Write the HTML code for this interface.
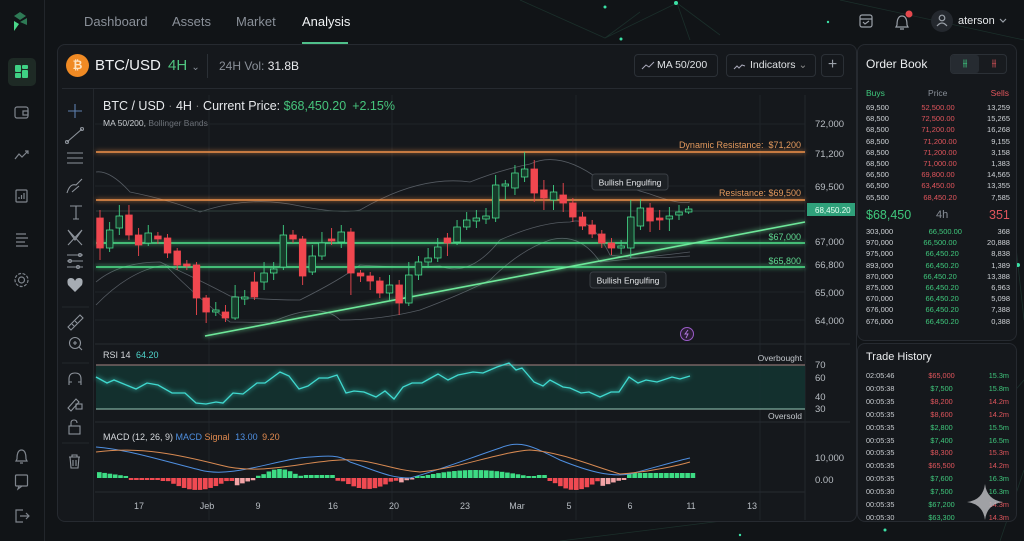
<!DOCTYPE html>
<html><head><meta charset="utf-8">
<style>
*{margin:0;padding:0;box-sizing:border-box}
body{width:1024px;height:541px;overflow:hidden;background:#111417;font-family:"Liberation Sans",sans-serif;color:#d6d9dd;position:relative}
.a{position:absolute;white-space:nowrap}
.nav{font-size:13px;color:#8a9099;top:14px}
.ob{font-size:7.5px;line-height:11.2px}
.ob div{display:flex;justify-content:space-between;position:relative;padding:0 3px}
.th div{display:flex;justify-content:space-between;font-size:7.3px;line-height:12.9px}
.r{color:#e0555c}.g{color:#3fc77c}
</style></head><body>
<!-- background network -->
<svg class="a" style="left:0;top:0" width="1024" height="541">
<g stroke="#1f3a33" stroke-width="0.8" fill="none" opacity="0.7">
<path d="M520 0 L605 38 L677 3 L720 35 M677 3 L690 40 M605 38 L640 12 M840 0 L1024 40 M1000 100 L1024 320 M990 420 L1024 380 M1000 541 L1024 470 M560 541 L730 520"/>
</g>
<g fill="#3be0a5"><circle cx="676" cy="3" r="2"/><circle cx="605" cy="7" r="1.5"/><circle cx="621" cy="39" r="1.5"/><circle cx="828" cy="22" r="1.2"/><circle cx="1018" cy="265" r="2"/><circle cx="885" cy="530" r="1.5"/><circle cx="740" cy="535" r="1.2"/></g>
</svg>
<!-- sidebar -->
<div class="a" style="left:44px;top:0;width:1px;height:541px;background:#22262b"></div>
<svg class="a" style="left:0;top:0" width="44" height="541" fill="none" stroke="#7f858d" stroke-width="1.2">
<path d="M14 16 L20 12 L26 16 L20 20Z" fill="#2e7a55" stroke="none"/><path d="M14 21 L19 24 L14 31Z" fill="#4bd78a" stroke="none"/><path d="M20 22 L27 18 L27 25Z" fill="#2e7a55" stroke="none"/>
<rect x="8" y="58" width="28" height="28" rx="5" fill="#1e2a25" stroke="none"/>
<g fill="#3fd184" stroke="none"><rect x="15" y="65" width="6" height="7" rx="1"/><rect x="22" y="65" width="6" height="4" rx="1"/><rect x="15" y="73" width="6" height="5" rx="1"/><rect x="22" y="70" width="6" height="8" rx="1"/></g>
<rect x="15" y="107" width="13" height="11" rx="2"/><path d="M23 111h5v4h-5z"/>
<path d="M15 159 L19 154 L22 157 L28 151 M25 151h3v3"/>
<rect x="16" y="190" width="11" height="12" rx="1"/><path d="M19 199v-2M21.5 199v-4M24 199v-6"/>
<path d="M16 234h10M16 238h12M16 242h9M16 246h12"/>
<circle cx="21.5" cy="280" r="3"/><circle cx="21.5" cy="280" r="6.5" stroke-dasharray="3 1.5"/>
<path d="M17 459 Q17 450 21.5 450 Q26 450 26 459 L27 461 H16Z M20 463h3"/>
<rect x="15.5" y="475" width="12" height="11" rx="1"/><path d="M19 486 l-1 3 4-3"/>
<path d="M23 510h-7v12h7M20 516h9M26 513l3 3-3 3"/>
</svg>
<!-- top nav -->
<div class="a nav" style="left:84px">Dashboard</div>
<div class="a nav" style="left:172px">Assets</div>
<div class="a nav" style="left:236px">Market</div>
<div class="a nav" style="left:302px;color:#f1f3f5">Analysis</div>
<div class="a" style="left:302px;top:42px;width:46px;height:2px;background:#4fbf8a"></div>
<svg class="a" style="left:850px;top:8px" width="174" height="28" fill="none" stroke="#9aa0a8" stroke-width="1.2">
<rect x="10" y="7" width="12" height="12" rx="2"/><path d="M10 11h12M13 14l2 2 4-3"/>
<path d="M47 17 Q47 8 52 8 Q57 8 57 17 L58 19 H46Z M50 21h4"/><circle cx="59" cy="6" r="3.5" fill="#e5484d" stroke="none"/>
<circle cx="92" cy="13" r="11" fill="#24282e" stroke="none"/><circle cx="92" cy="10" r="2.8"/><path d="M87 18 Q92 12 97 18"/>
<path d="M150 11l3 3 3-3"/>
</svg>
<div class="a" style="left:958px;top:15px;font-size:11px;color:#e5e7ea">aterson</div>
<!-- main panel -->
<div class="a" style="left:57px;top:44px;width:800px;height:478px;border:1px solid #262a30;border-radius:8px;background:#15181c"></div>
<div class="a" style="left:66px;top:54px;width:23px;height:23px;border-radius:50%;background:#f08a24;color:#fde3c2;font-size:12px;font-weight:bold;text-align:center;line-height:23px">₿</div>
<div class="a" style="left:95px;top:57px;font-size:15px;color:#f0f2f4">BTC/USD <span style="color:#4fc47f;margin-left:3px">4H</span> <span style="color:#8a9099;font-size:10px">⌄</span></div>
<div class="a" style="left:207px;top:54px;width:1px;height:24px;background:#2b3036"></div>
<div class="a" style="left:219px;top:59px;font-size:12px;color:#8a9099">24H Vol: <span style="color:#e8eaed">31.8B</span></div>
<div class="a" style="left:634px;top:54px;width:84px;height:23px;border:1px solid #2b3036;border-radius:4px;font-size:10.5px;line-height:21px;padding-left:22px;color:#dfe2e5">MA 50/200</div>
<div class="a" style="left:726px;top:54px;width:90px;height:23px;border:1px solid #2b3036;border-radius:4px;font-size:10.5px;line-height:21px;padding-left:23px;color:#dfe2e5">Indicators <span style="color:#888">⌄</span></div>
<div class="a" style="left:821px;top:54px;width:23px;height:23px;border:1px solid #2b3036;border-radius:4px;font-size:16px;line-height:20px;text-align:center;color:#9aa0a8">+</div>
<svg class="a" style="left:640px;top:60px" width="120" height="12" fill="none" stroke="#aab" stroke-width="1"><path d="M2 9l4-4 3 2 5-5"/><path d="M94 9l3-3 2 2 3-3 3 1"/></svg>
<div class="a" style="left:62px;top:88px;width:790px;height:1px;background:#262a30"></div>
<!-- tools column -->
<div class="a" style="left:93px;top:89px;width:1px;height:432px;background:#23272c"></div>
<svg class="a" style="left:58px;top:95px" width="34" height="380" fill="none" stroke="#8d939b" stroke-width="1.1">
<path d="M17 9v14M10 16h14" stroke="#5e7fae"/>
<path d="M9 47l15-13"/><circle cx="9" cy="47" r="1.5"/><circle cx="24" cy="34" r="1.5"/>
<path d="M9 58h16M9 63h16M9 68h16"/>
<path d="M9 98 Q12 88 18 90 L24 84 M14 97 l7-6"/>
<path d="M12 111h12M18 111v13M15 124h6"/>
<path d="M10 135 L24 150 M24 135 L10 150 M10 135 L17 145 L24 135"/>
<path d="M9 160h16M9 166h16M9 172h16"/><circle cx="22" cy="160" r="1.5"/><circle cx="12" cy="166" r="1.5"/><circle cx="20" cy="172" r="1.5"/>
<path d="M17 197 L10 190 Q8 183 13 183 Q16 183 17 186 Q18 183 21 183 Q26 183 24 190Z" fill="#a6acb3" stroke="none"/>
<path d="M4 212h27" stroke="#24282d"/>
<path d="M10 232 L22 220 L25 223 L13 235Z M14 229l2 2M17 226l2 2"/>
<circle cx="17" cy="248" r="5.5"/><path d="M21 252l3 3M15 248h4M17 246v4"/>
<path d="M4 268h27" stroke="#24282d"/>
<path d="M11 290v-6 Q11 278 17 278 Q23 278 23 284 V290 M11 287h3M20 287h3"/>
<path d="M10 313l8-9 3 3-8 9z"/><rect x="18" y="309" width="6" height="5"/>
<rect x="11" y="331" width="11" height="8"/><path d="M13 331v-3 Q13 325 16 325 Q19 325 19 328"/>
<path d="M4 348h27" stroke="#24282d"/>
<path d="M11 362h11M14 362v-2h5v2M12 362l1 11h7l1-11M15 365v6M18 365v6"/>
</svg>
<!-- chart -->
<svg class="a" style="left:0;top:0" width="856" height="541" font-family="Liberation Sans" >
<defs>
<filter id="gl" x="-10%" y="-200%" width="120%" height="500%"><feGaussianBlur stdDeviation="2.5" result="b"/><feMerge><feMergeNode in="b"/><feMergeNode in="SourceGraphic"/></feMerge></filter>
</defs>
<g stroke="#1f2328" stroke-width="1">
<path d="M95 124H805M95 186H805M95 264H805M95 292H805M95 320H805M209 95V520M392 95V520M576 95V520M760 95V520"/>
<path d="M95 344H850M95 422H850M95 492H805" stroke="#272b31"/>
<path d="M805 95V520" stroke="#23272c"/>
</g>
<text x="103" y="110" font-size="12.5" fill="#e6e8eb">BTC / USD <tspan fill="#777">·</tspan> 4H <tspan fill="#777">·</tspan> Current Price: <tspan fill="#46c47c">$68,450.20</tspan><tspan fill="#46c47c" dx="6">+2.15%</tspan></text>
<text x="103" y="126" font-size="8.5" fill="#c8ccd0">MA 50/200, <tspan fill="#6c7178">Bollinger Bands</tspan></text>
<!-- bollinger -->
<g fill="none" stroke="#555b62" stroke-width="0.8">
<path d="M96 172 Q110 170 130 192 Q170 200 200 212 Q250 195 300 206 Q340 214 360 210 Q420 175 470 182 Q500 170 530 164 Q560 150 600 180 Q620 185 650 194 Q680 205 690 202"/>
<path d="M96 282 Q120 262 160 262 Q200 280 230 296 Q260 300 300 300 Q340 280 360 265 Q400 268 440 266 Q470 278 500 240 Q540 222 570 222 Q590 215 610 255 Q640 260 690 256"/>
<path d="M96 305 Q130 270 165 265 Q200 300 230 322 Q250 322 270 323 Q320 300 340 320 Q380 320 420 310 Q460 295 490 280 Q520 250 550 240 Q580 232 600 262 Q640 258 690 252"/>
</g>
<!-- levels -->
<g filter="url(#gl)" stroke-width="1.6">
<path d="M96 152H805M96 200H805" stroke="#f0924a"/>
<path d="M96 243H805M96 267H805" stroke="#4fe38c"/>
<path d="M205 336L805 222" stroke="#6ee89a" stroke-width="1.6"/>
</g>
<path d="M96 211H805" stroke="#3a4c48" stroke-width="0.8"/>
<g font-size="9" text-anchor="end">
<text x="801" y="148" fill="#e59a5d">Dynamic Resistance: &nbsp;$71,200</text>
<text x="801" y="196" fill="#e59a5d">Resistance: $69,500</text>
<text x="801" y="240" fill="#5fd990">$67,000</text>
<text x="801" y="264" fill="#5fd990">$65,800</text>
</g>
<g font-size="9.5" fill="#b8bdc3">
<text x="815" y="127">72,000</text><text x="815" y="157">71,200</text><text x="815" y="190">69,500</text><text x="815" y="245">67,000</text><text x="815" y="268">66,800</text><text x="815" y="296">65,000</text><text x="815" y="324">64,000</text>
</g>
<rect x="807" y="203" width="48" height="13" fill="#2fa07a"/>
<text x="815" y="213" font-size="8" fill="#e8fff3">68,450.20</text>
<g id="candles"></g>
<rect x="592" y="174" width="76" height="16" rx="3" fill="#1d2125" stroke="#3a3f45"/>
<text x="630" y="185.5" font-size="8.5" fill="#e4e6e9" text-anchor="middle">Bullish Engulfing</text>
<rect x="590" y="272" width="76" height="16" rx="3" fill="#1d2125" stroke="#3a3f45"/>
<text x="628" y="283.5" font-size="8.5" fill="#e4e6e9" text-anchor="middle">Bullish Engulfing</text>
<circle cx="687" cy="334" r="6.5" fill="#2a1d33" stroke="#9b5cc9"/><path d="M688 330l-3 4h3l-2 4" stroke="#b47ae0" fill="none" stroke-width="0.9"/>
<!-- RSI -->
<rect x="96" y="365" width="709" height="44" fill="#133331" opacity="0.9"/>
<path d="M96 365H805" stroke="#8a7070" stroke-width="1.2"/><path d="M96 409H805" stroke="#7da89a" stroke-width="1.2"/>
<text x="103" y="358" font-size="9" fill="#d5d8dc">RSI 14 <tspan fill="#4fd6cc" dx="3">64.20</tspan></text>
<text x="802" y="361" font-size="8.5" fill="#c3c7cc" text-anchor="end">Overbought</text>
<text x="802" y="419" font-size="8.5" fill="#c3c7cc" text-anchor="end">Oversold</text>
<g font-size="9.5" fill="#b8bdc3"><text x="815" y="368">70</text><text x="815" y="381">60</text><text x="815" y="400">40</text><text x="815" y="412">30</text></g>
<polyline filter="url(#gl)" fill="none" stroke="#3fd9cf" stroke-width="1.3" points="96,377 107,383 114,380 136,389 147,383 158,385 172,393 185,393 196,403 206,404 216,402 223,403 233,393 243,394 257,383 265,383 280,372 289,376 299,389 308,386 319,378 328,378 337,375 346,393 354,391 364,392 376,397 385,391 394,399 403,387 412,383 422,383 429,379 438,374 448,380 458,375 473,372 483,373 497,367 509,363 516,370 522,368 534,382 543,386 550,380 563,387 570,388 581,393 589,392 600,397 611,392 619,392 629,377 638,383 646,380 657,382 672,377 680,379 690,376"/>
<!-- MACD -->
<text x="103" y="440" font-size="9" fill="#d5d8dc">MACD (12, 26, 9) <tspan fill="#4f8fe0">MACD</tspan> <tspan fill="#e08a4f">Signal</tspan> <tspan fill="#4f8fe0" dx="3">13.00</tspan> <tspan fill="#e08a4f" dx="2">9.20</tspan></text>
<g font-size="9.5" fill="#b8bdc3"><text x="815" y="461">10,000</text><text x="815" y="483">0.00</text></g>
<g id="hist"></g>
<path d="M96 447 C130 450 160 460 200 470 C230 478 270 462 300 458 C330 455 340 455 350 462 C380 472 390 478 410 478 C440 470 470 458 500 448 C520 440 530 445 560 460 C590 472 610 477 630 474 C660 466 680 460 690 458" fill="none" stroke="#4f8fe0" stroke-width="1"/>
<path d="M96 452 C140 446 180 455 220 465 C260 476 300 462 340 460 C370 458 390 470 420 472 C460 468 500 452 530 450 C560 452 590 465 620 474 C650 472 680 465 690 462" fill="none" stroke="#d88a52" stroke-width="1"/>
<g font-size="9" fill="#b8bdc3" text-anchor="middle">
<text x="139" y="509">17</text><text x="207" y="509">Jeb</text><text x="258" y="509">9</text><text x="333" y="509">16</text><text x="394" y="509">20</text><text x="465" y="509">23</text><text x="517" y="509">Mar</text><text x="569" y="509">5</text><text x="630" y="509">6</text><text x="691" y="509">11</text><text x="752" y="509">13</text>
</g>
</svg>
<!-- order book -->
<div class="a" style="left:857px;top:44px;width:160px;height:297px;border:1px solid #262a30;border-radius:8px;background:#15181c"></div>
<div class="a" style="left:866px;top:57px;font-size:12px;color:#eceef0">Order Book</div>
<div class="a" style="left:950px;top:54px;width:57px;height:20px;border:1px solid #2b3036;border-radius:4px;background:#181b1f"></div>
<div class="a" style="left:951px;top:55px;width:28px;height:18px;border-radius:3px;background:#262b31;color:#3fd184;font-size:10px;text-align:center;line-height:18px">⫵</div>
<div class="a" style="left:981px;top:55px;width:26px;height:18px;color:#e0555c;font-size:10px;text-align:center;line-height:18px">⫵</div>
<div class="a" style="left:866px;top:88px;width:143px;font-size:8.5px;display:flex;justify-content:space-between"><span class="g">Buys</span><span style="color:#8a9099">Price</span><span class="r">Sells</span></div>
<div class="a ob" style="left:863px;top:102px;width:150px;color:#cfd3d7">
<div><span>69,500</span><span class="r">52,500.00</span><span>13,259</span><i class="a" style="left:64px;top:1px;width:86px;height:9px;background:#3a1e22;z-index:-1"></i></div>
<div><span>68,500</span><span class="r">72,500.00</span><span>15,265</span><i class="a" style="left:64px;top:1px;width:86px;height:9px;background:#3a1e22;z-index:-1"></i></div>
<div><span>68,500</span><span class="r">71,200.00</span><span>16,268</span><i class="a" style="left:64px;top:1px;width:86px;height:9px;background:#3a1e22;z-index:-1"></i></div>
<div><span>68,500</span><span class="r">71,200.00</span><span>9,155</span></div>
<div><span>68,500</span><span class="r">71,200.00</span><span>3,158</span></div>
<div><span>68,500</span><span class="r">71,000.00</span><span>1,383</span></div>
<div><span>66,500</span><span class="r">69,800.00</span><span>14,565</span><i class="a" style="left:64px;top:1px;width:86px;height:9px;background:#331c20;z-index:-1"></i></div>
<div><span>66,500</span><span class="r">63,450.00</span><span>13,355</span><i class="a" style="left:64px;top:1px;width:86px;height:9px;background:#331c20;z-index:-1"></i></div>
<div><span>65,500</span><span class="r">68,450.20</span><span>7,585</span><i class="a" style="left:62px;top:1px;width:46px;height:9px;background:#4a2226;z-index:-1"></i></div>
</div>
<div class="a" style="left:866px;top:208px;font-size:12.5px" ><span class="g">$68,450</span></div>
<div class="a" style="left:936px;top:209px;font-size:11px;color:#8a9099">4h</div>
<div class="a" style="left:989px;top:208px;font-size:12.5px" class="r"><span class="r">351</span></div>
<div class="a ob" style="left:863px;top:226px;width:150px;color:#cfd3d7">
<div><span>303,000</span><span class="g">66,500.00</span><span>368</span><i class="a" style="left:64px;top:1px;width:38px;height:9px;background:#173828;z-index:-1"></i></div>
<div><span>970,000</span><span class="g">66,500.00</span><span>20,888</span><i class="a" style="left:64px;top:1px;width:40px;height:9px;background:#173828;z-index:-1"></i></div>
<div><span>975,000</span><span class="g">66,450.20</span><span>8,838</span><i class="a" style="left:64px;top:1px;width:40px;height:9px;background:#173828;z-index:-1"></i></div>
<div><span>893,000</span><span class="g">66,450.20</span><span>1,389</span><i class="a" style="left:62px;top:1px;width:42px;height:9px;background:#173828;z-index:-1"></i></div>
<div><span>870,000</span><span class="g">66,450.20</span><span>13,388</span><i class="a" style="left:55px;top:1px;width:48px;height:9px;background:#1a3d2c;z-index:-1"></i></div>
<div><span>875,000</span><span class="g">66,450.20</span><span>6,963</span><i class="a" style="left:42px;top:1px;width:62px;height:9px;background:#1a3d2c;z-index:-1"></i></div>
<div><span>670,000</span><span class="g">66,450.20</span><span>5,098</span><i class="a" style="left:38px;top:1px;width:66px;height:9px;background:#1a3d2c;z-index:-1"></i></div>
<div><span>676,000</span><span class="g">66,450.20</span><span>7,388</span><i class="a" style="left:0;top:1px;width:110px;height:9px;background:#1d4431;z-index:-1"></i></div>
<div><span>676,000</span><span class="g">66,450.20</span><span>0,388</span><i class="a" style="left:0;top:1px;width:130px;height:9px;background:#1d4431;z-index:-1"></i></div>
</div>
<!-- trade history -->
<div class="a" style="left:857px;top:343px;width:160px;height:179px;border:1px solid #262a30;border-radius:8px;background:#15181c"></div>
<div class="a" style="left:866px;top:351px;font-size:11px;color:#eceef0">Trade History</div>
<div class="a th" style="left:866px;top:370px;width:143px;color:#c8ccd0">
<div><span>02:05:46</span><span class="r">$65,000</span><span class="g">15.3m</span></div>
<div><span>00:05:38</span><span class="g">$7,500</span><span class="g">15.8m</span></div>
<div><span>00:05:35</span><span class="r">$8,200</span><span class="r">14.2m</span></div>
<div><span>00:05:35</span><span class="r">$8,600</span><span class="r">14.2m</span></div>
<div><span>00:05:35</span><span class="g">$2,800</span><span class="g">15.5m</span></div>
<div><span>00:05:35</span><span class="g">$7,400</span><span class="g">16.5m</span></div>
<div><span>00:05:35</span><span class="r">$8,300</span><span class="r">15.3m</span></div>
<div><span>00:05:35</span><span class="r">$65,500</span><span class="r">14.2m</span></div>
<div><span>00:05:35</span><span class="g">$7,600</span><span class="g">16.3m</span></div>
<div><span>00:05:30</span><span class="g">$7,500</span><span class="g">16.3m</span></div>
<div><span>00:05:35</span><span class="g">$67,200</span><span class="r">14.3m</span></div>
<div><span>00:05:30</span><span class="g">$63,300</span><span class="r">14.3m</span></div>
</div>
<svg class="a" style="left:965px;top:482px" width="40" height="40"><path d="M20 2 Q22 18 38 20 Q22 22 20 38 Q18 22 2 20 Q18 18 20 2Z" fill="#b8babd" opacity="0.85"/></svg>
<script>
var C=[[218,248,210,260,0],[230,248,222,252,1],[216,228,205,235,1],[215,235,205,240,0],[235,245,228,256,0],[233,243,225,246,1],[236,239,232,244,0],[238,253,234,258,0],[251,265,248,270,0],[264,266,260,270,0],[265,298,262,315,0],[298,312,295,323,0],[310,312,302,316,1],[312,318,305,322,0],[297,318,285,320,1],[297,299,290,305,1],[282,297,272,300,0],[273,282,262,290,1],[269,273,262,280,1],[235,267,225,270,1],[235,239,230,243,0],[239,276,236,285,0],[256,272,245,275,1],[243,256,232,260,1],[239,241,228,245,0],[232,242,225,248,1],[232,273,228,295,0],[273,276,270,282,0],[276,281,272,290,0],[281,293,277,298,0],[285,293,275,300,1],[285,303,280,315,0],[275,303,262,306,1],[262,275,256,280,1],[258,262,248,268,1],[247,258,238,262,1],[238,243,233,256,0],[227,242,220,245,1],[220,227,212,230,1],[218,221,210,228,1],[216,219,208,224,1],[185,218,175,222,1],[184,186,180,200,1],[173,188,165,195,1],[169,177,152,182,1],[169,193,160,202,0],[190,198,180,210,0],[192,200,185,210,1],[195,203,183,212,0],[203,217,198,222,0],[217,226,212,230,0],[225,234,220,238,0],[234,243,230,248,0],[243,248,238,255,0],[246,248,240,254,1],[217,248,200,258,1],[208,226,199,230,1],[208,221,203,232,0],[218,220,210,230,0],[216,219,207,231,1],[212,215,205,220,1],[209,212,206,214,1]];
var s='';C.forEach(function(c,i){var x=100+i*9.65,gr=c[4];var col=gr?'#3fd184':'#f0474f';s+='<line x1="'+x+'" x2="'+x+'" y1="'+c[2]+'" y2="'+c[3]+'" stroke="'+col+'" stroke-width="0.9"/>';s+='<rect x="'+(x-3.3)+'" y="'+c[0]+'" width="6.6" height="'+Math.max(1.5,c[1]-c[0])+'" fill="'+(gr?'#173a2a':'#f0474f')+'" stroke="'+(gr?'#47d98b':'#f0474f')+'" stroke-width="0.8"/>';});
document.getElementById('candles').innerHTML=s;
function H(x){var seg=[[96,125,6,1],[125,160,-2,0],[160,230,-12,1],[230,255,-9,2],[255,300,9,1],[300,335,3,0],[335,395,-11,1],[395,410,-6,2],[410,535,8,1],[535,545,3,0],[545,600,-12,1],[600,625,-8,2],[625,692,5,0]];for(var i=0;i<seg.length;i++){var q=seg[i];if(x>=q[0]&&x<q[1]){var t=(x-q[0])/(q[1]-q[0]);var a=q[3]==1?Math.sin(Math.PI*t):(q[3]==2?1-t:1);if(q[0]==96)a=1-t*0.7;return [q[2]*Math.max(0.25,a),q[3]==2];}}return [0,0];}
var h='';for(var x=97;x<691;x+=5.3){var r=H(x),v=r[0];var y=v>0?478-v:478;var c=v>0?'#3ddc84':(r[1]?'#f2a3a6':'#f04a52');h+='<rect x="'+x+'" y="'+y+'" width="4.6" height="'+Math.max(1,Math.abs(v))+'" fill="'+c+'"/>';}
document.getElementById('hist').innerHTML=h;
</script>
</body></html>
